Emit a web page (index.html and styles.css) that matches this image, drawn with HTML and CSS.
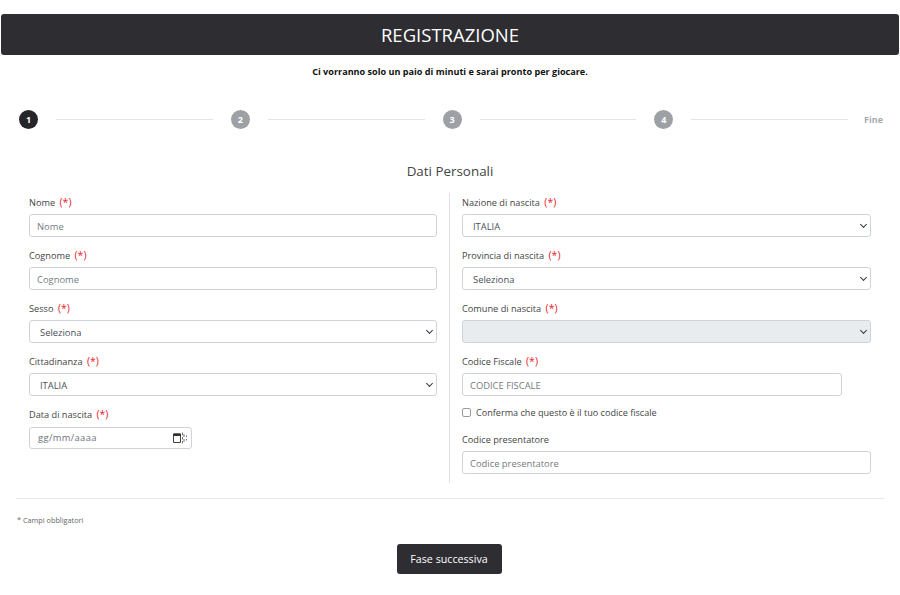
FILE: index.html
```html
<!DOCTYPE html>
<html lang="it">

<head>
    <meta charset="UTF-8">
    <meta name="viewport" content="width=device-width, initial-scale=1.0">
    <link rel="stylesheet" href="styles.css">
    <title>Registrazione</title>
</head>

<body>
    <header class="banner">REGISTRAZIONE</header>
    <p class="intro">Ci vorranno solo un paio di minuti e sarai pronto per giocare.</p>

    <div class="steps">
        <span class="step current">1</span>
        <span class="step-line"></span>
        <span class="step">2</span>
        <span class="step-line"></span>
        <span class="step">3</span>
        <span class="step-line"></span>
        <span class="step">4</span>
        <span class="step-line"></span>
        <span class="step-end">Fine</span>
    </div>

    <h2 class="section-title">Dati Personali</h2>

    <form class="form-columns">
        <div class="col col-left">
            <div class="field">
                <label>Nome <span class="req">(*)</span></label>
                <input class="control" type="text" placeholder="Nome">
            </div>
            <div class="field">
                <label>Cognome <span class="req">(*)</span></label>
                <input class="control" type="text" placeholder="Cognome">
            </div>
            <div class="field">
                <label>Sesso <span class="req">(*)</span></label>
                <div class="control select">Seleziona</div>
            </div>
            <div class="field">
                <label>Cittadinanza <span class="req">(*)</span></label>
                <div class="control select">ITALIA</div>
            </div>
            <div class="field">
                <label>Data di nascita <span class="req">(*)</span></label>
                <div class="control date">
                    <span>gg/mm/aaaa</span>
                    <svg width="15" height="12" viewBox="0 0 15 12">
                        <path d="M0.5 2h7v8.5h-7z" fill="none" stroke="#444" stroke-width="1"/>
                        <path d="M0.5 1.5h7v2.5h-7z" fill="#333"/>
                        <path d="M9.5 0.5v3M9.5 5v2.5M9.5 9v2.5M11 2v3M11 7v3M13.5 3.5v1.5M13.5 7v1.5" stroke="#777" stroke-width="1"/>
                    </svg>
                </div>
            </div>
        </div>

        <div class="col col-right">
            <div class="field">
                <label>Nazione di nascita <span class="req">(*)</span></label>
                <div class="control select">ITALIA</div>
            </div>
            <div class="field">
                <label>Provincia di nascita <span class="req">(*)</span></label>
                <div class="control select">Seleziona</div>
            </div>
            <div class="field">
                <label>Comune di nascita <span class="req">(*)</span></label>
                <div class="control select disabled"></div>
            </div>
            <div class="field field-tight">
                <label>Codice Fiscale <span class="req">(*)</span></label>
                <input class="control short" type="text" placeholder="CODICE FISCALE">
            </div>
            <label class="check"><span class="box"></span>Conferma che questo è il tuo codice fiscale</label>
            <div class="field field-last">
                <label>Codice presentatore</label>
                <input class="control" type="text" placeholder="Codice presentatore">
            </div>
        </div>
    </form>

    <hr class="rule">
    <p class="note">* Campi obbligatori</p>

    <div class="actions">
        <button class="next" type="button">Fase successiva</button>
    </div>
</body>

</html>
```

FILE: styles.css
```css
* {
    margin: 0;
    padding: 0;
    box-sizing: border-box;
}

body {
    font-family: "Open Sans", "Noto Sans", sans-serif;
    font-size: 9.2px;
    color: #495057;
    background: #fff;
    padding: 14px 1px 0 1px;
    height: 595px;
    overflow: hidden;
}

.banner {
    height: 41px;
    line-height: 42px;
    background-color: #2e2d32;
    color: #fff;
    text-align: center;
    font-size: 18.5px;
    border-radius: 3px;
}

.intro {
    margin-top: 10px;
    height: 14px;
    line-height: 14px;
    text-align: center;
    font-size: 9.1px;
    font-weight: 700;
    color: #111;
}

.steps {
    display: flex;
    align-items: center;
    gap: 18px;
    margin-top: 30px;
    padding: 0 16px 0 18px;
    height: 20px;
}

.step {
    flex: none;
    width: 19px;
    height: 19px;
    border-radius: 50%;
    background-color: #9da1a6;
    color: #fff;
    font-size: 9px;
    font-weight: 700;
    display: flex;
    align-items: center;
    justify-content: center;
}

.step.current {
    background-color: #26262a;
}

.step-line {
    flex: 1;
    height: 1px;
    background-color: #e3e4e6;
}

.step-end {
    flex: none;
    margin-left: -2px;
    font-size: 9px;
    font-weight: 700;
    color: #a6aaae;
}

.section-title {
    margin-top: 31px;
    height: 22px;
    line-height: 22px;
    text-align: center;
    font-size: 13.4px;
    font-weight: 400;
    color: #444;
}

.form-columns {
    display: flex;
    margin-top: 11px;
    padding: 0 28px;
    height: 290px;
}

.col {
    width: 420px;
    padding-top: 2px;
}

.col-left {
    padding-right: 12px;
}

.col-right {
    border-left: 1px solid #dee2e6;
    padding-left: 12px;
    flex: 1;
}

.field {
    margin-bottom: 11px;
}

.field label {
    display: block;
    height: 19px;
    line-height: 14px;
    font-size: 9.2px;
    color: #444;
}

.field label,
.check {
    white-space: nowrap;
}

.field-last label {
    line-height: 16px;
}

.req {
    color: #e8202c;
    font-size: 10.5px;
    margin-left: 2px;
}

.control {
    display: block;
    width: 100%;
    height: 23px;
    line-height: 22px;
    border: 1px solid #ced4da;
    border-radius: 3px;
    background-color: #fff;
    padding: 1px 7px 0;
    font-family: inherit;
    font-size: 9.4px;
    color: #495057;
    outline: none;
}

.control::placeholder {
    color: #767c82;
    opacity: 1;
}

.select {
    padding-left: 10px;
    position: relative;
}

.select::after {
    content: "";
    position: absolute;
    right: 4px;
    top: 7px;
    width: 4px;
    height: 4px;
    border-right: 1.6px solid #343a40;
    border-bottom: 1.6px solid #343a40;
    transform: rotate(45deg);
}

.disabled {
    background-color: #e9ecef;
}

.short {
    width: 380px;
}

.date {
    width: 163px;
    margin-top: 1px;
    height: 22px;
    padding: 0 3px 0 8px;
    display: flex;
    align-items: center;
    justify-content: space-between;
    letter-spacing: 0.35px;
    color: #6c7278;
}

.check {
    display: flex;
    align-items: center;
    gap: 5px;
    height: 14px;
    margin-top: -2px;
    margin-bottom: 13px;
    color: #444;
    font-size: 9.1px;
}

.box {
    width: 9px;
    height: 9px;
    border: 1px solid #9a9a9a;
    border-radius: 2px;
    background: #fff;
}

.rule {
    border: 0;
    border-top: 1px solid #e6e7e9;
    margin: 15px 15px 0 15px;
}

.note {
    margin-top: 16px;
    padding-left: 16px;
    font-size: 7.3px;
    line-height: 10px;
    color: #666;
}

.actions {
    display: flex;
    justify-content: center;
    margin-top: 19px;
    padding-right: 2px;
}

.next {
    width: 105px;
    height: 30px;
    border: 0;
    border-radius: 3px;
    background-color: #2e2d32;
    color: #fff;
    font-family: inherit;
    font-size: 10.7px;
}
```
